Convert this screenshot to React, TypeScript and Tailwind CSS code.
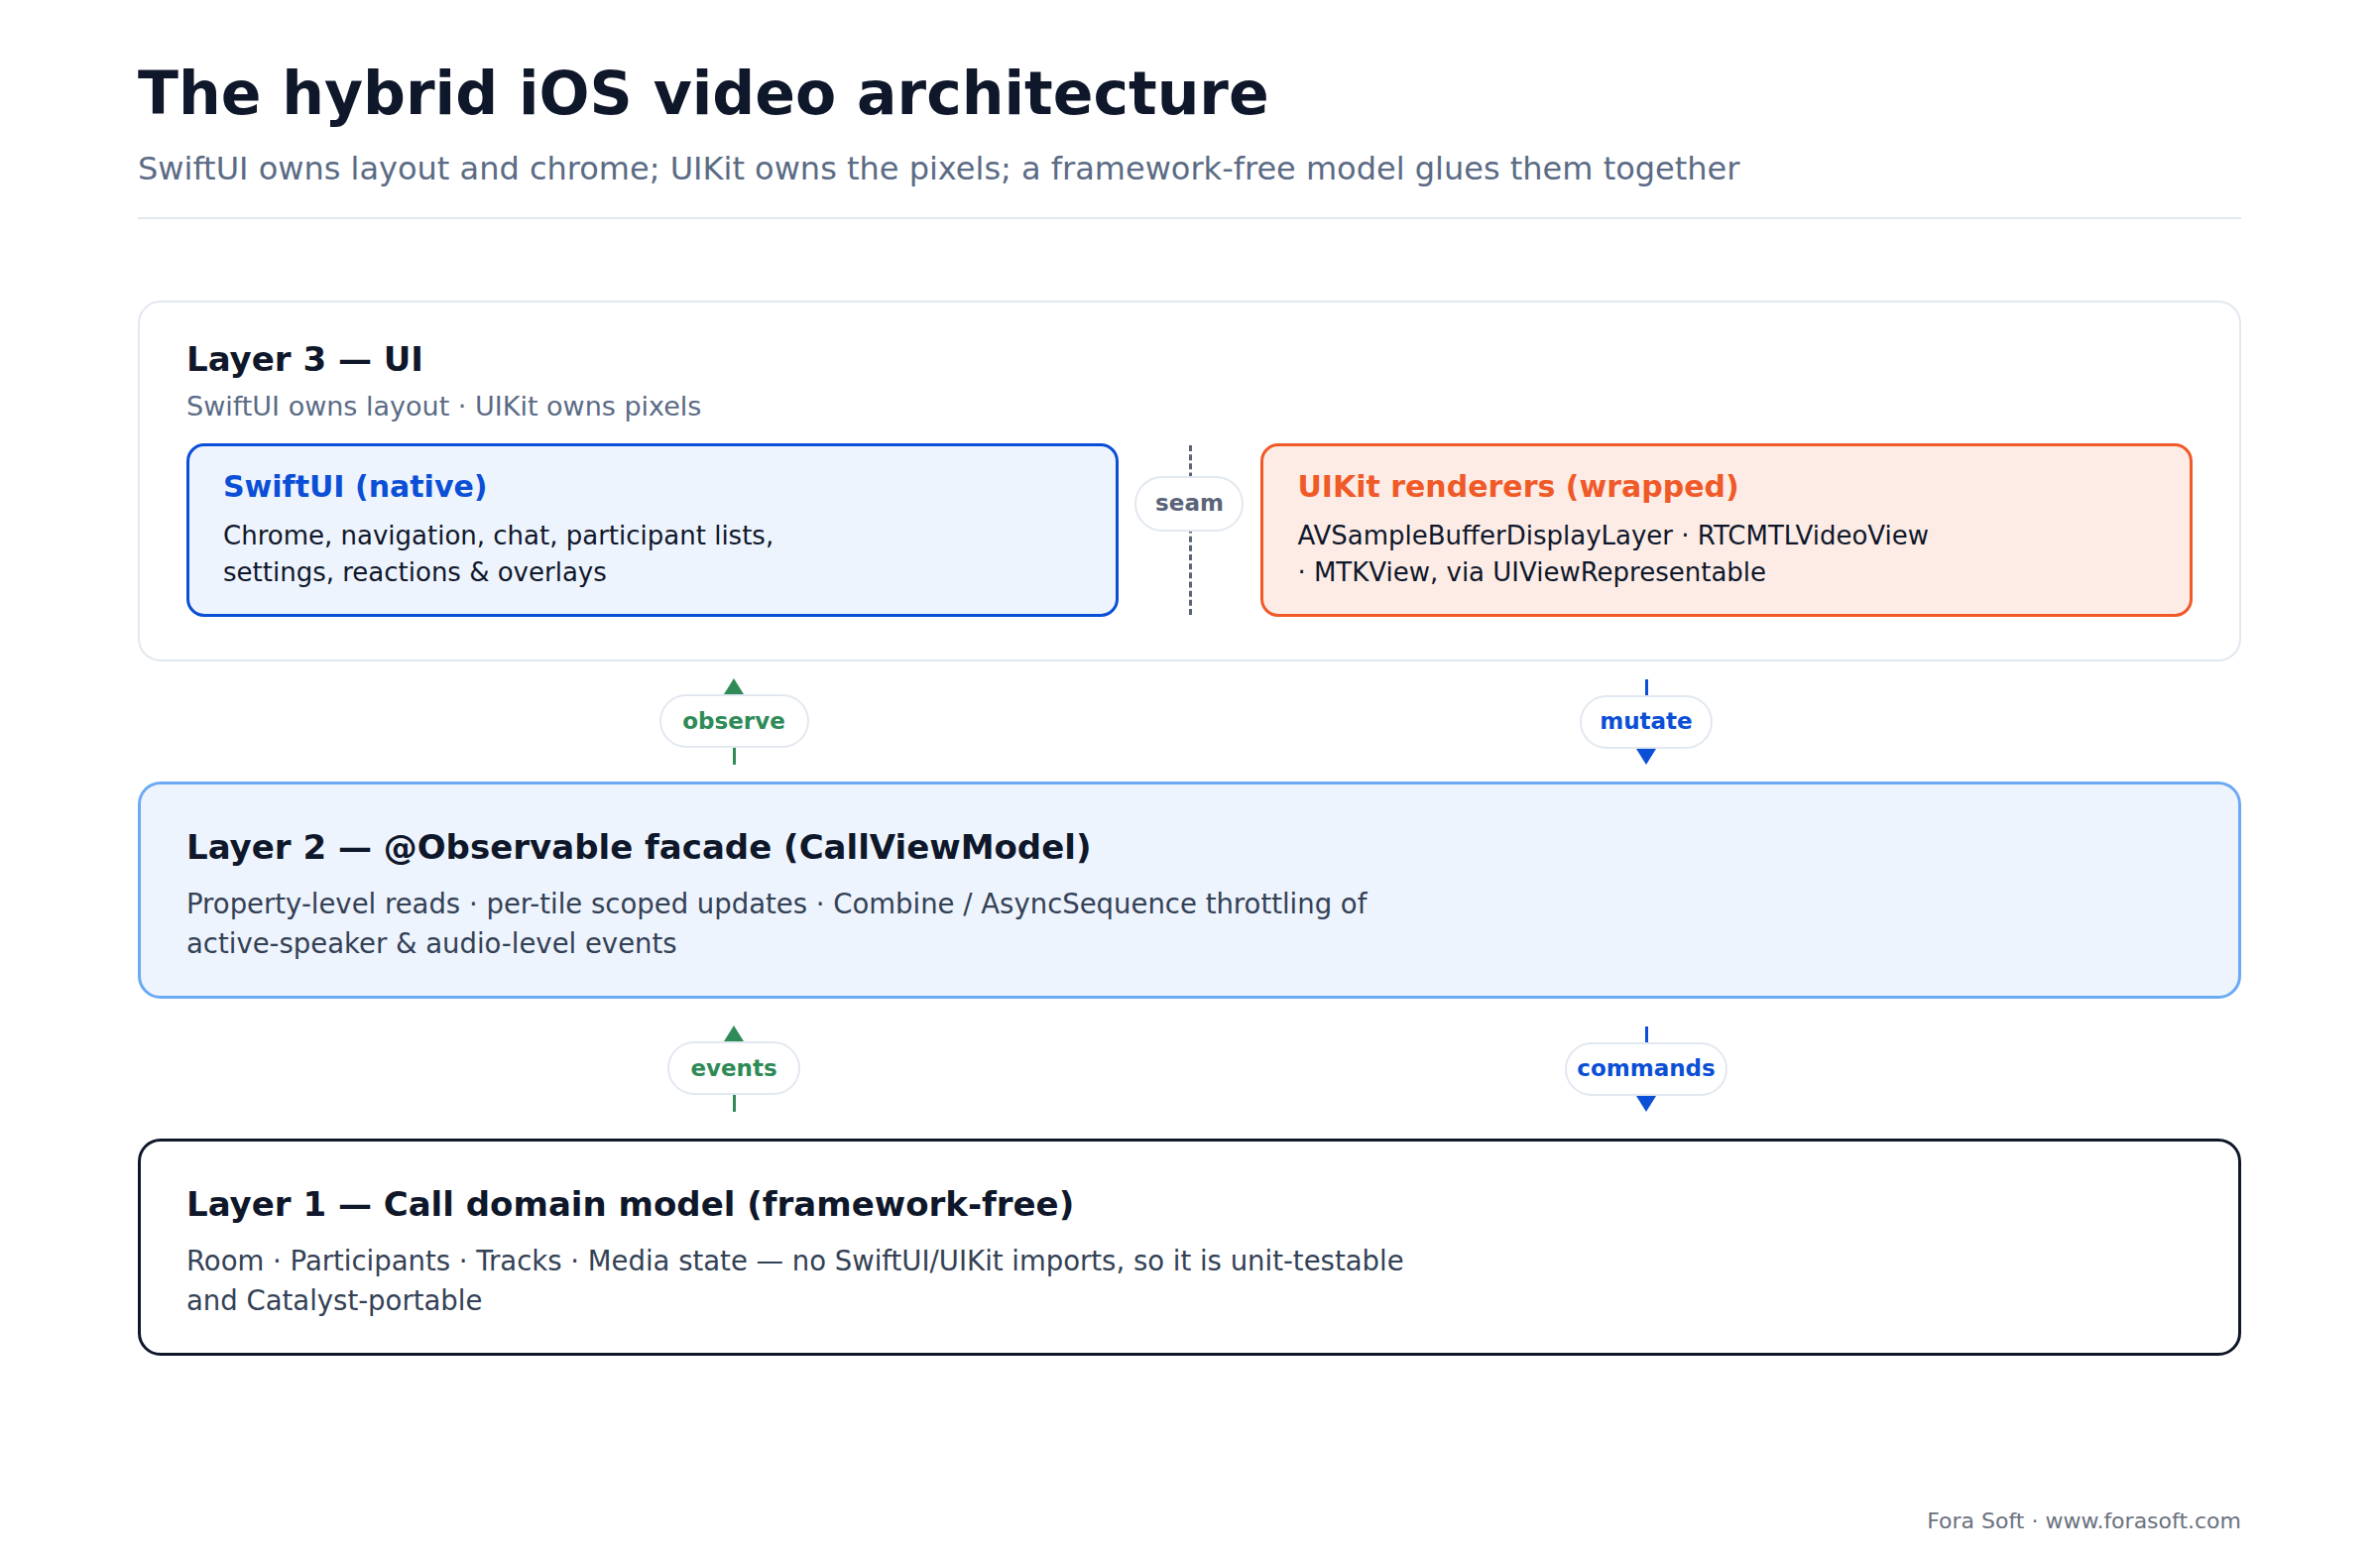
import React from 'react';

const font = { fontFamily: '"DejaVu Sans", Verdana, sans-serif' };

const Pill: React.FC<{ label: string; color: string; w: string }> = ({ label, color, w }) => (
  <div className={`h-[54px] ${w} rounded-[27px] border-2 border-[#e2e8f0] bg-white flex items-center justify-center text-[23px] font-bold ${color}`}>
    {label}
  </div>
);

const Connector: React.FC<{ label: string; up: boolean; green: boolean; w: string }> = ({ label, up, green, w }) => {
  const line = green ? 'border-[#2e8b57]' : 'border-[#0b4fd6]';
  const text = green ? 'text-[#2e8b57]' : 'text-[#0b4fd6]';
  const tri = green ? 'border-b-[#2e8b57]' : 'border-t-[#0b4fd6]';
  return (
    <div className="w-[200px] h-full flex flex-col items-center justify-center">
      {up ? (
        <div className={`w-0 h-0 border-x-[10px] border-x-transparent border-b-[16px] ${tri}`} />
      ) : (
        <div className={`h-[16px] border-l-[3px] ${line}`} />
      )}
      <Pill label={label} color={text} w={w} />
      {up ? (
        <div className={`h-[17px] border-l-[3px] ${line}`} />
      ) : (
        <div className={`w-0 h-0 border-x-[10px] border-x-transparent border-t-[16px] ${tri}`} />
      )}
    </div>
  );
};

export default function App() {
  return (
    <div className="w-[2400px] h-[1580px] bg-white text-[#0f172a] relative" style={font}>
      <div className="pl-[139px] pr-[140px] pt-[64px]">
        <h1 className="text-[60px] font-bold leading-none text-[#0f172a]">The hybrid iOS video architecture</h1>
        <p className="mt-[30px] text-[32px] text-[#5b6b85] leading-none">
          SwiftUI owns layout and chrome; UIKit owns the pixels; a framework-free model glues them together
        </p>
        <div className="mt-[33px] h-[2px] bg-[#e2e8f0]" />

        {/* Layer 3 */}
        <div className="mt-[82px] h-[364px] rounded-[23px] border-2 border-[#e2e8f0] px-[47px] pt-[40px]">
          <div className="text-[34px] font-bold leading-none">Layer 3 — UI</div>
          <div className="mt-[17px] text-[27px] text-[#5b6b85] leading-none">SwiftUI owns layout · UIKit owns pixels</div>
          <div className="mt-[24px] flex">
            <div className="w-[941px] h-[175px] rounded-[18px] border-[3px] border-[#0b4fd6] bg-[#eef4fe] px-[34px] pt-[26px]">
              <div className="text-[30px] font-bold text-[#0b4fd6] leading-none">SwiftUI (native)</div>
              <div className="mt-[16px] text-[26px] leading-[37px] text-[#0f172a]">
                Chrome, navigation, chat, participant lists,<br />settings, reactions &amp; overlays
              </div>
            </div>
            <div className="w-[144px] relative flex items-center justify-center">
              <div className="absolute top-[2px] bottom-[2px] left-1/2 border-l-[3px] border-dashed border-[#5b6478]" />
              <div className="relative h-[56px] w-[110px] rounded-[28px] border-2 border-[#e2e8f0] bg-white flex items-center justify-center text-[23px] font-bold text-[#5b6478] -mt-[54px]">
                seam
              </div>
            </div>
            <div className="w-[941px] h-[175px] rounded-[18px] border-[3px] border-[#f05a28] bg-[#fdece6] px-[34px] pt-[26px]">
              <div className="text-[30px] font-bold text-[#f05a28] leading-none">UIKit renderers (wrapped)</div>
              <div className="mt-[16px] text-[26px] leading-[37px] text-[#0f172a]">
                AVSampleBufferDisplayLayer · RTCMTLVideoView<br />· MTKView, via UIViewRepresentable
              </div>
            </div>
          </div>
        </div>

        <div className="h-[121px] flex">
          <div className="ml-[501px]"><Connector label="observe" up green w="w-[151px]" /></div>
          <div className="ml-[720px]"><Connector label="mutate" up={false} green={false} w="w-[134px]" /></div>
        </div>

        {/* Layer 2 */}
        <div className="h-[219px] rounded-[23px] border-[3px] border-[#6aaaf5] bg-[#eef4fe] px-[46px] pt-[46px]">
          <div className="text-[34px] font-bold leading-none">Layer 2 — @Observable facade (CallViewModel)</div>
          <div className="mt-[20px] text-[27.5px] leading-[40px] text-[#334155]">
            Property-level reads · per-tile scoped updates · Combine / AsyncSequence throttling of<br />active-speaker &amp; audio-level events
          </div>
        </div>

        <div className="h-[141px] flex">
          <div className="ml-[501px]"><Connector label="events" up green w="w-[134px]" /></div>
          <div className="ml-[720px]"><Connector label="commands" up={false} green={false} w="w-[164px]" /></div>
        </div>

        {/* Layer 1 */}
        <div className="h-[219px] rounded-[23px] border-[3px] border-[#0f172a] bg-white px-[46px] pt-[46px]">
          <div className="text-[34px] font-bold leading-none">Layer 1 — Call domain model (framework-free)</div>
          <div className="mt-[20px] text-[27.5px] leading-[40px] text-[#334155]">
            Room · Participants · Tracks · Media state — no SwiftUI/UIKit imports, so it is unit-testable<br />and Catalyst-portable
          </div>
        </div>

        <div className="mt-[150px] text-right text-[22px] text-[#6b7280]">Fora Soft · www.forasoft.com</div>
      </div>
    </div>
  );
}
